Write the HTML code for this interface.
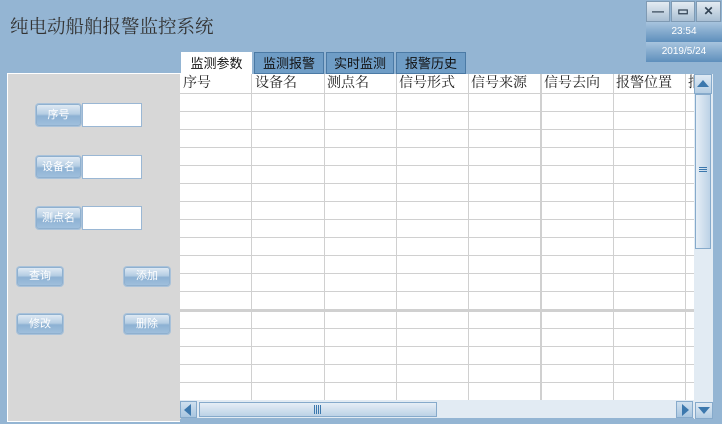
<!DOCTYPE html>
<html><head><meta charset="utf-8"><style>
*{margin:0;padding:0;box-sizing:border-box}
body{width:722px;height:424px;background:#94b5d3;position:relative;overflow:hidden;font-family:"Liberation Sans","Noto Sans CJK SC",sans-serif}
.a{position:absolute}
.title{left:10px;top:13px;font-size:18.5px;color:#333;font-family:"Liberation Serif","Noto Serif CJK SC",serif}
.wb{top:1px;width:24px;height:21px;background:linear-gradient(#e4ebf2,#a9bfd3);border:1px solid #7f9ab3;color:#345;font-size:12px;text-align:center;line-height:19px;font-weight:bold}
.info{left:646px;width:76px;height:20px;background:linear-gradient(#a8c4de,#5e8fbc);color:#fff;font-size:10px;text-align:center;line-height:20px}
.tab{top:52px;height:22px;font-size:13px;text-align:center;line-height:21px;color:#111;border:1px solid #4b7aa5;background:#6f9dc6}
.panel{left:7px;top:73px;width:174px;height:349px;background:#d7d7d7;border:1px solid #fff;border-right:none}
.btn{background:linear-gradient(#dfe9f3 0%,#b5cde3 45%,#8db1d3 55%,#9fbfdc 100%);border:1px solid #8fb0cf;border-radius:3px;color:#fff;font-size:11px;text-align:center;box-shadow:0 0 0 1px #a9c2da}
.inp{background:#fff;border:1px solid #9ab7d4}
.grid{left:180px;top:74px;width:514px;height:344px;background:#fff;overflow:hidden}
.hd{top:0;font-size:14px;color:#222;line-height:19px;font-family:"Liberation Serif","Noto Serif CJK SC",serif}
.vl{top:0;width:1px;height:330px;background:#d0d0d0}
.hl{left:0;width:514px;height:1px;background:#d0d0d0}
</style></head><body>
<div class="a title">纯电动船舶报警监控系统</div>
<div class="a wb" style="left:646px">—</div>
<div class="a wb" style="left:671px">▭</div>
<div class="a wb" style="left:696px;width:25px">✕</div>
<div class="a info" style="top:22px">23:54</div>
<div class="a info" style="top:42px">2019/5/24</div>

<div class="a tab" style="left:181px;width:71px;background:#fff;border-color:#fff;height:23px">监测参数</div>
<div class="a tab" style="left:254px;width:70px">监测报警</div>
<div class="a tab" style="left:326px;width:68px">实时监测</div>
<div class="a tab" style="left:396px;width:70px">报警历史</div>

<div class="a panel"></div>
<div class="a btn" style="left:36px;top:104px;width:45px;height:22px;line-height:20px">序号</div>
<div class="a inp" style="left:82px;top:103px;width:60px;height:24px"></div>
<div class="a btn" style="left:36px;top:156px;width:45px;height:22px;line-height:20px">设备名</div>
<div class="a inp" style="left:82px;top:155px;width:60px;height:24px"></div>
<div class="a btn" style="left:36px;top:207px;width:45px;height:22px;line-height:20px">测点名</div>
<div class="a inp" style="left:82px;top:206px;width:60px;height:24px"></div>
<div class="a btn" style="left:17px;top:267px;width:46px;height:19px;line-height:17px">查询</div>
<div class="a btn" style="left:124px;top:267px;width:46px;height:19px;line-height:17px">添加</div>
<div class="a btn" style="left:17px;top:314px;width:46px;height:20px;line-height:18px">修改</div>
<div class="a btn" style="left:124px;top:314px;width:46px;height:20px;line-height:18px">删除</div>

<div class="a grid">
<div class="a hd" style="left:3px">序号</div>
<div class="a hd" style="left:75px">设备名</div>
<div class="a hd" style="left:147px">测点名</div>
<div class="a hd" style="left:219px">信号形式</div>
<div class="a hd" style="left:291px">信号来源</div>
<div class="a hd" style="left:364px">信号去向</div>
<div class="a hd" style="left:436px">报警位置</div>
<div class="a hd" style="left:508px">报</div>
<div class="a vl" style="left:71px"></div><div class="a vl" style="left:144px"></div><div class="a vl" style="left:216px"></div><div class="a vl" style="left:288px"></div><div class="a vl" style="left:360px"></div><div class="a vl" style="left:361px"></div><div class="a vl" style="left:433px"></div><div class="a vl" style="left:505px"></div>
<div class="a hl" style="top:19px"></div><div class="a hl" style="top:37px"></div><div class="a hl" style="top:55px"></div><div class="a hl" style="top:73px"></div><div class="a hl" style="top:91px"></div><div class="a hl" style="top:109px"></div><div class="a hl" style="top:127px"></div><div class="a hl" style="top:145px"></div><div class="a hl" style="top:163px"></div><div class="a hl" style="top:181px"></div><div class="a hl" style="top:199px"></div><div class="a hl" style="top:217px"></div><div class="a hl" style="top:235px;height:3px"></div><div class="a hl" style="top:254px"></div><div class="a hl" style="top:272px"></div><div class="a hl" style="top:290px"></div><div class="a hl" style="top:308px"></div><div class="a hl" style="top:326px"></div>
<div class="a" style="left:0;top:326px;width:514px;height:18px;background:#e2ebf3"></div>
<div class="a" style="left:0;top:327px;width:17px;height:17px;background:linear-gradient(#cfe0ef,#a9c6e0);border:1px solid #86aacb"></div>
<div class="a" style="left:4px;top:330px;width:0;height:0;border-top:6px solid transparent;border-bottom:6px solid transparent;border-right:7px solid #3c78ad"></div>
<div class="a" style="left:19px;top:328px;width:238px;height:15px;background:linear-gradient(#e6eef6,#bcd2e6);border:1px solid #86aacb"></div>
<div class="a" style="left:134px;top:331px;width:8px;height:9px;background:repeating-linear-gradient(90deg,#3c78ad 0 1px,transparent 1px 2px)"></div>
<div class="a" style="left:496px;top:327px;width:17px;height:17px;background:linear-gradient(#cfe0ef,#a9c6e0);border:1px solid #86aacb"></div>
<div class="a" style="left:502px;top:330px;width:0;height:0;border-top:6px solid transparent;border-bottom:6px solid transparent;border-left:7px solid #3c78ad"></div>
</div>
<div class="a" style="left:694px;top:74px;width:19px;height:345px;background:#e2ebf3"></div>
<div class="a" style="left:694px;top:74px;width:18px;height:20px;background:linear-gradient(#dfeaf4,#b4cde3);border:1px solid #86aacb"></div>
<div class="a" style="left:697px;top:80px;width:0;height:0;border-left:6px solid transparent;border-right:6px solid transparent;border-bottom:7px solid #3c78ad"></div>
<div class="a" style="left:695px;top:94px;width:16px;height:155px;background:linear-gradient(90deg,#e6eef6,#bcd2e6);border:1px solid #86aacb"></div>
<div class="a" style="left:699px;top:167px;width:8px;height:6px;background:repeating-linear-gradient(#3c78ad 0 1px,transparent 1px 2px)"></div>
<div class="a" style="left:695px;top:402px;width:18px;height:17px;background:linear-gradient(#dfeaf4,#b4cde3);border:1px solid #86aacb"></div>
<div class="a" style="left:698px;top:407px;width:0;height:0;border-left:6px solid transparent;border-right:6px solid transparent;border-top:7px solid #3c78ad"></div>
<div class="a" style="left:180px;top:419px;width:540px;height:3px;background:#94b5d3"></div>
</body></html>
